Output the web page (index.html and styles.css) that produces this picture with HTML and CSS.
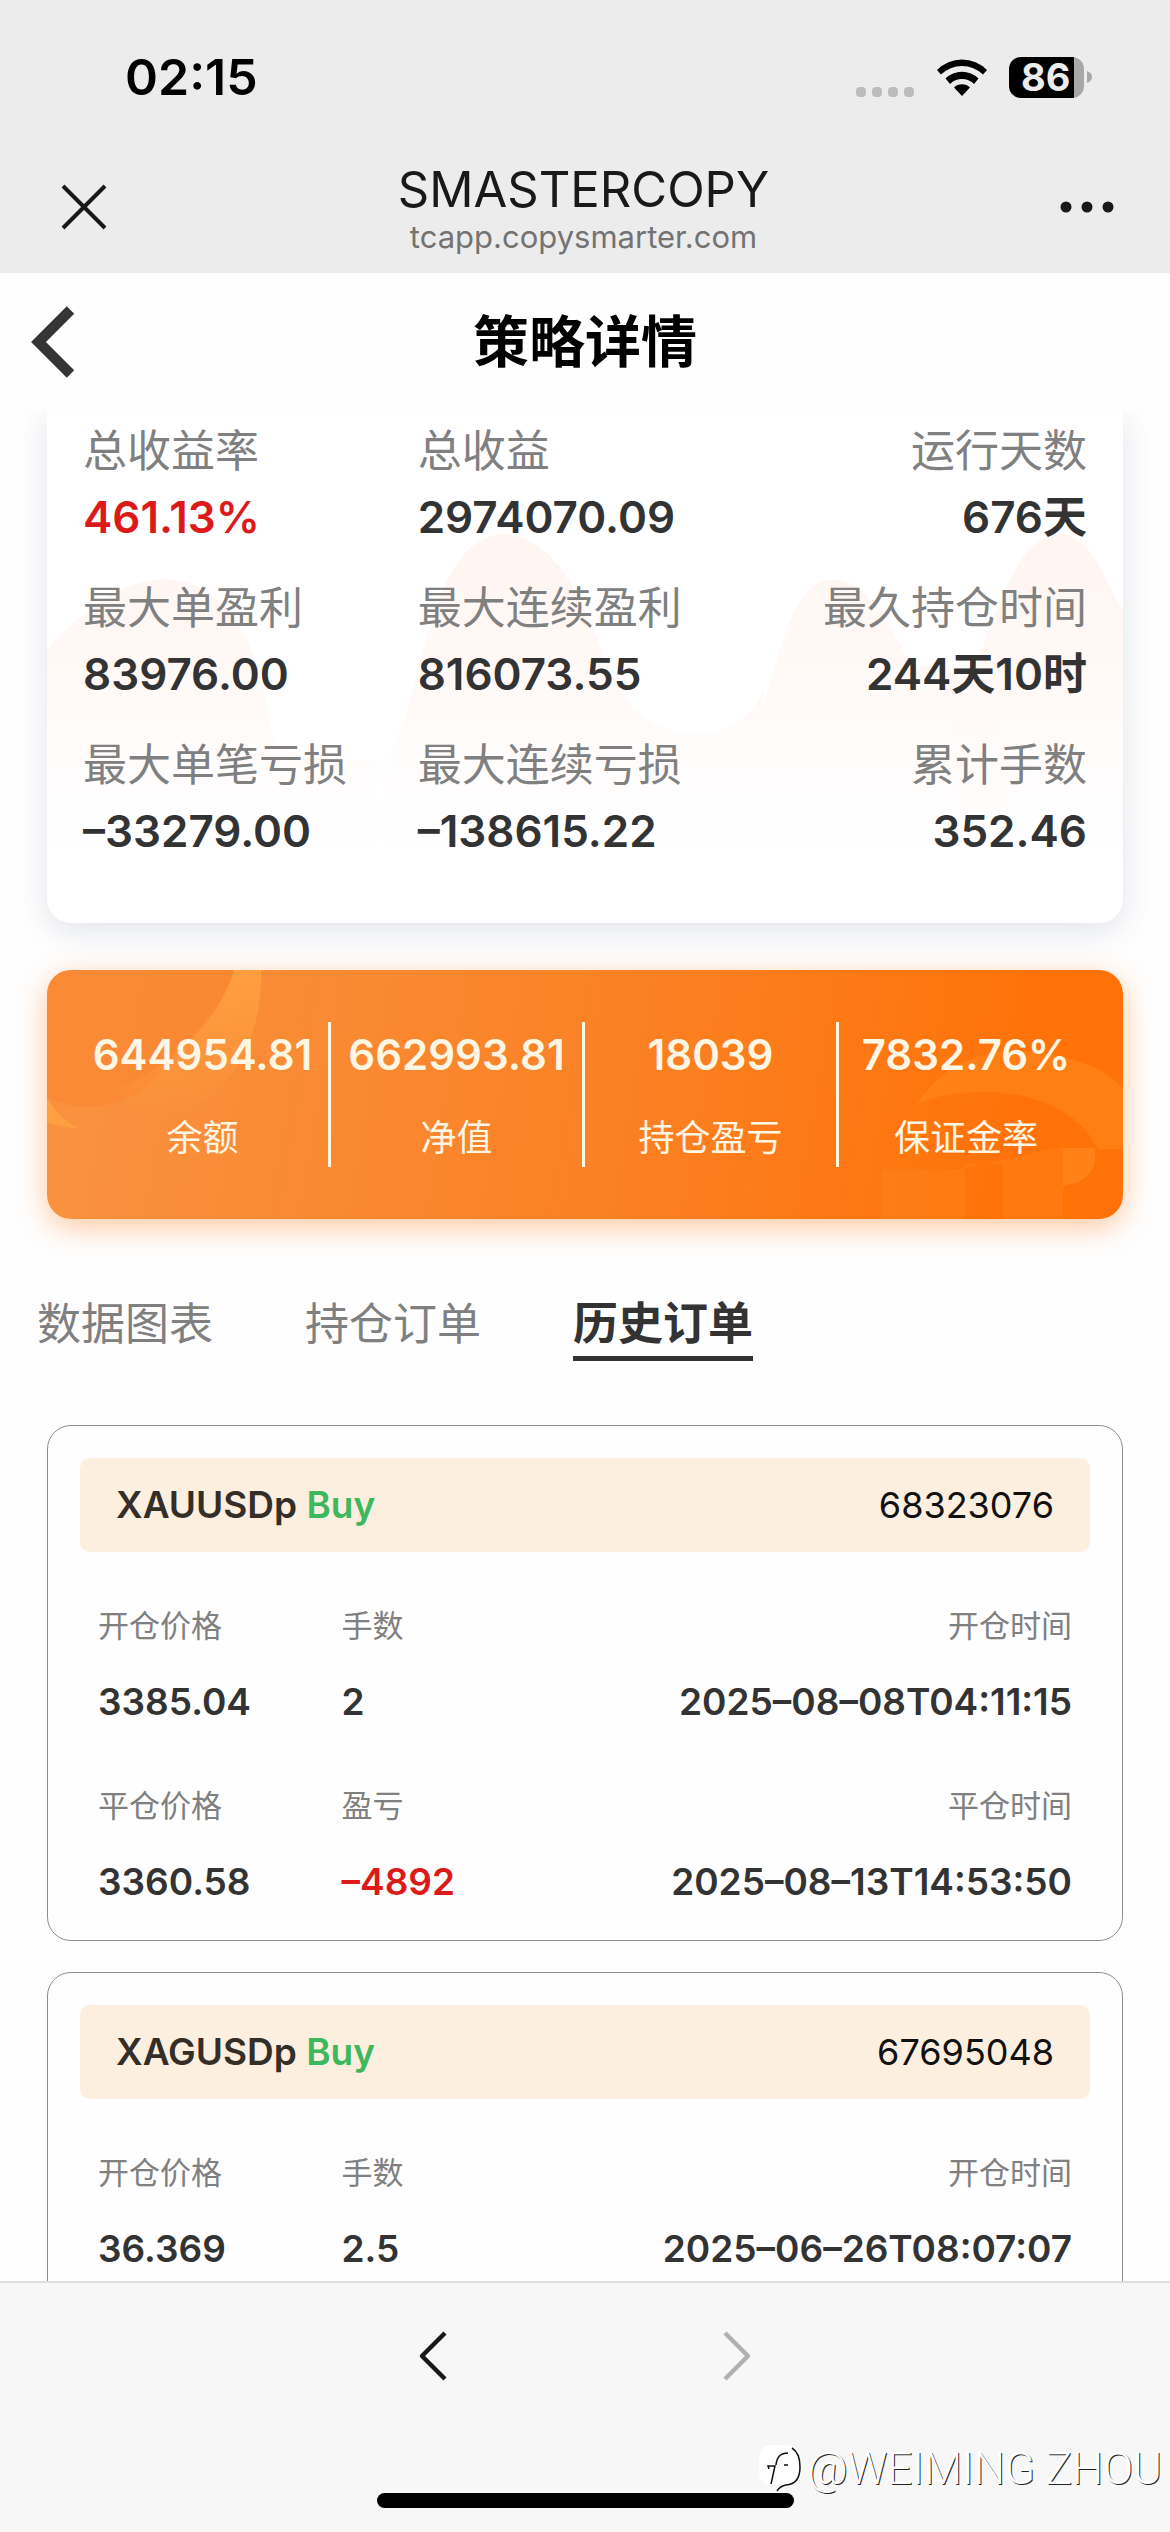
FILE: index.html
```html
<!DOCTYPE html>
<html lang="zh-CN">
<head>
<meta charset="utf-8">
<meta name="viewport" content="width=device-width, initial-scale=1">
<title>SMASTERCOPY</title>
<link rel="stylesheet" href="styles.css">
</head>
<body>
<header class="chrome">
  <div class="status">
    <time class="clock">02:15</time>
    <div class="indicators">
      <svg class="signal" width="60" height="12" viewBox="0 0 60 12" aria-hidden="true"><g fill="#bcbcbc"><rect x="1" y="1" width="10" height="10" rx="4"/><rect x="17" y="1" width="10" height="10" rx="4"/><rect x="33" y="1" width="10" height="10" rx="4"/><rect x="49" y="1" width="10" height="10" rx="4"/></g></svg>
      <svg width="50" height="38" viewBox="0 0 50 38" aria-label="Wi-Fi"><path d="M0 12A35 35 0 0 1 50 12L46 16.500A30 30 0 0 0 4 16.500Z"/><path d="M8.500 20.500A23.500 23.500 0 0 1 41.500 20.500L37 26A17 17 0 0 0 13 26Z"/><path d="M17 29.500A11.500 11.500 0 0 1 33 29.500L25 38Z"/></svg>
      <div class="battery"><span class="battery-level">86</span><svg class="battery-nub" width="5" height="12" viewBox="0 0 5 12" aria-hidden="true"><path d="M0 0Q5 2 5 6T0 12Z" fill="#a8a8a8"/></svg></div>
    </div>
  </div>
  <div class="titlebar">
    <button class="icon-button" type="button" aria-label="关闭"><svg width="46" height="46" viewBox="0 0 46 46"><path d="M2 2L44 44M44 2L2 44" stroke="#191919" stroke-width="4"/></svg></button>
    <div class="site">
      <div class="site-name">SMASTERCOPY</div>
      <div class="site-host">tcapp.copysmarter.com</div>
    </div>
    <button class="icon-button" type="button" aria-label="更多"><svg width="54" height="12" viewBox="0 0 54 12"><g fill="#191919"><circle cx="6" cy="6" r="5.500"/><circle cx="27" cy="6" r="5.500"/><circle cx="48" cy="6" r="5.500"/></g></svg></button>
  </div>
</header>

<div class="page-head">
  <button class="icon-button" type="button" aria-label="返回"><svg width="44" height="72" viewBox="0 0 44 72"><path d="M39.500 4L7.500 36L39.500 68" fill="none" stroke="#353535" stroke-width="10.500"/></svg></button>
  <h1>策略详情</h1>
</div>

<main class="content">
  <section class="stats">
    <svg class="stats-art" viewBox="0 0 1076 514" preserveAspectRatio="none" aria-hidden="true">
      <defs>
        <linearGradient id="hill" x1="0" y1="120" x2="0" y2="470" gradientUnits="userSpaceOnUse"><stop offset="0" stop-color="#fff5f1"/><stop offset=".5" stop-color="#fffaf8"/><stop offset="1" stop-color="#fff" stop-opacity="0"/></linearGradient>
      </defs>
      <g fill="url(#hill)">
        <path d="M0 240C30 205 80 165 125 170C190 178 215 250 224 320C232 352 290 352 330 350V470H0Z"/>
        <path d="M340 350C378 290 378 130 456 124C530 130 545 240 580 290C625 345 700 330 716 280V470H330Z"/>
        <path d="M716 300C735 230 750 170 786 170C825 170 850 230 866 260C905 240 945 300 966 330V470H716Z"/>
        <path d="M905 300C950 230 960 124 1015 124C1050 130 1060 180 1076 200V470H905Z"/>
      </g>
    </svg>
    <dl class="stats-grid">
      <div><dt>总收益率</dt><dd class="loss">461.13%</dd></div>
      <div><dt>总收益</dt><dd>2974070.09</dd></div>
      <div><dt>运行天数</dt><dd>676天</dd></div>
      <div><dt>最大单盈利</dt><dd>83976.00</dd></div>
      <div><dt>最大连续盈利</dt><dd>816073.55</dd></div>
      <div><dt>最久持仓时间</dt><dd>244天10时</dd></div>
      <div><dt>最大单笔亏损</dt><dd>–33279.00</dd></div>
      <div><dt>最大连续亏损</dt><dd>–138615.22</dd></div>
      <div><dt>累计手数</dt><dd>352.46</dd></div>
    </dl>
  </section>

  <section class="account">
    <svg class="account-art account-art-left" width="216" height="160" viewBox="0 0 216 160" aria-hidden="true">
      <defs><linearGradient id="swoosh" x1="0" y1="0" x2="0" y2="1"><stop offset="0" stop-color="#ff9f40"/><stop offset="1" stop-color="#ff9f40" stop-opacity="0"/></linearGradient></defs>
      <path d="M0 0H187C175 40 145 62 125 90C95 130 50 150 0 128Z" fill="#ff7a20" opacity=".28"/>
      <path d="M187 0H214C216 60 190 120 135 145C110 152 90 145 70 120C130 90 170 55 187 0Z" fill="url(#swoosh)"/>
      <path d="M0 128Q12 148 32 159Q10 156 0 152Z" fill="#ff9f40"/>
    </svg>
    <svg class="account-art account-art-right" width="250" height="170" viewBox="0 0 250 170" aria-hidden="true">
      <path d="M44 55C70 15 110 0 150 2C200 6 235 20 250 40V100H225C205 60 160 43 110 43Q70 43 44 55Z" fill="#ff8c20" opacity=".5"/>
      <path d="M182 99H222Q226 132 190 137V170H130V115H92V170H8V120H90Z" fill="#ff9128" opacity=".25"/>
      <path d="M182 99H222Q226 132 190 137V99Z" fill="#ff9128" opacity=".4"/>
    </svg>
    <dl class="account-grid">
      <div><dt>余额</dt><dd>644954.81</dd></div>
      <div><dt>净值</dt><dd>662993.81</dd></div>
      <div><dt>持仓盈亏</dt><dd>18039</dd></div>
      <div><dt>保证金率</dt><dd>7832.76%</dd></div>
    </dl>
  </section>

  <nav class="tabs">
    <button class="tab" type="button">数据图表</button>
    <button class="tab" type="button">持仓订单</button>
    <button class="tab tab-active" type="button" aria-current="true">历史订单</button>
  </nav>

  <section class="orders">
    <article class="order">
      <header class="order-head"><h2>XAUUSDp <span class="buy">Buy</span></h2><span>68323076</span></header>
      <dl class="order-grid">
        <div><dt>开仓价格</dt><dd>3385.04</dd></div>
        <div><dt>手数</dt><dd>2</dd></div>
        <div><dt>开仓时间</dt><dd>2025–08–08T04:11:15</dd></div>
        <div><dt>平仓价格</dt><dd>3360.58</dd></div>
        <div><dt>盈亏</dt><dd class="loss">–4892</dd></div>
        <div><dt>平仓时间</dt><dd>2025–08–13T14:53:50</dd></div>
      </dl>
    </article>
    <article class="order">
      <header class="order-head"><h2>XAGUSDp <span class="buy">Buy</span></h2><span>67695048</span></header>
      <dl class="order-grid">
        <div><dt>开仓价格</dt><dd>36.369</dd></div>
        <div><dt>手数</dt><dd>2.5</dd></div>
        <div><dt>开仓时间</dt><dd>2025–06–26T08:07:07</dd></div>
      </dl>
    </article>
  </section>
</main>

<footer class="toolbar">
  <nav class="history">
    <button class="icon-button" type="button" aria-label="后退"><svg width="30" height="54" viewBox="0 0 30 54"><path d="M27 4L4 27L27 50" fill="none" stroke="#191919" stroke-width="4.500" stroke-linejoin="round"/></svg></button>
    <button class="icon-button" type="button" aria-label="前进" disabled><svg width="30" height="54" viewBox="0 0 30 54"><path d="M3 4L26 27L3 50" fill="none" stroke="#b0b0b0" stroke-width="4.500" stroke-linejoin="round"/></svg></button>
  </nav>
  <div class="home-bar"></div>
  <div class="watermark">
    <svg width="44" height="48" viewBox="0 0 44 48" aria-hidden="true">
      <path d="M12 0H28Q40 0 40 14V26Q40 40 28 40L19 46L18 40H12Q0 40 0 26V14Q0 0 12 0Z" fill="#fff"/>
      <path d="M33 3Q41 8 41 22Q41 39 27 40Q21 41 18 46" fill="none" stroke="#111" stroke-width="1.500"/>
      <path d="M12 39L16 21H9L10 24M17 20Q18 8 29 8M25 20H29" fill="none" stroke="#111" stroke-width="1.500"/>
    </svg>
    <span>@WEIMING ZHOU</span>
  </div>
</footer>
</body>
</html>
```
FILE: styles.css
```css
* {
  box-sizing: border-box;
}

body {
  margin: 0;
  height: 100vh;
  display: flex;
  flex-direction: column;
  overflow: hidden;
  background: #fefefe;
  color: #333;
  font-family: Inter, "Noto Sans CJK SC", sans-serif;
}

h1, h2, dl, dd {
  margin: 0;
}

button {
  border: 0;
  padding: 0;
  background: none;
  font-family: inherit;
}

svg {
  display: block;
}

.icon-button {
  display: flex;
}

/* Status bar and browser title */

.chrome {
  flex: none;
  background: #ececec;
  color: #000;
}

.status {
  display: flex;
  justify-content: space-between;
  align-items: center;
  height: 154px;
  padding: 0 78px 0 125px;
}

.clock {
  font-size: 50px;
  font-weight: 600;
}

.indicators {
  display: flex;
  align-items: center;
  gap: 22px;
}

.signal {
  align-self: flex-end;
}

.battery {
  display: flex;
  align-items: center;
  gap: 3px;
}

.battery-level {
  width: 75px;
  height: 41px;
  padding-left: 12px;
  border-radius: 12px;
  background: linear-gradient(90deg, #000 65px, #a8a8a8 65px);
  color: #ececec;
  font-size: 38px;
  font-weight: 700;
  line-height: 41px;
}

.titlebar {
  display: flex;
  justify-content: space-between;
  align-items: center;
  height: 119px;
  padding: 0 56px 14px 61px;
}

.site {
  display: flex;
  flex-direction: column;
  align-items: center;
}

.site-name {
  color: #191919;
  font-size: 49px;
  line-height: 60px;
}

.site-host {
  color: #737373;
  font-size: 31px;
  line-height: 34px;
}

/* Page heading */

.page-head {
  flex: none;
  position: relative;
  display: flex;
  align-items: center;
  height: 137px;
  padding: 0 31px;
}

.page-head h1 {
  flex: 1;
  margin-right: 44px;
  color: #000;
  font-size: 56px;
  line-height: 72px;
  text-align: center;
}

.content {
  flex: 1;
  min-height: 0;
  overflow: hidden;
  padding: 0 47px;
}

/* Strategy figures */

.stats {
  position: relative;
  padding: 9px 36px 58px;
  border-radius: 0 0 24px 24px;
  background: #fff;
  box-shadow: 0 8px 30px rgba(60, 70, 110, 0.14);
}

.stats-art {
  position: absolute;
  inset: 0;
  width: 100%;
  height: 100%;
}

.stats-grid {
  position: relative;
  display: grid;
  grid-template-columns: repeat(3, 1fr);
  row-gap: 25px;
}

.stats-grid div:nth-child(3n) {
  text-align: right;
}

.stats-grid dt {
  color: #808080;
  font-size: 44px;
  line-height: 64px;
  white-space: nowrap;
}

.stats-grid dd {
  font-size: 44px;
  font-weight: 600;
  line-height: 68px;
}

.stats-grid .loss,
.order-grid .loss {
  color: #dd1a1a;
}

/* Account summary */

.account {
  position: relative;
  margin-top: 47px;
  padding: 52px 30px;
  border-radius: 24px;
  background: linear-gradient(100deg, #f9913f 5%, #fb8023 55%, #ff7208 90%);
  box-shadow: 0 8px 30px rgba(255, 120, 20, 0.4);
}

.account-art {
  position: absolute;
}

.account-art-left {
  top: 0;
  left: 0;
  border-top-left-radius: 24px;
}

.account-art-right {
  right: 0;
  bottom: 0;
  border-bottom-right-radius: 24px;
}

.account-grid {
  position: relative;
  display: grid;
  grid-template-columns: repeat(4, 1fr);
  color: #fff6e3;
  text-align: center;
}

.account-grid div {
  display: flex;
  flex-direction: column-reverse;
  gap: 21px;
}

.account-grid div:not(:last-child) {
  border-right: 3px solid #fff6e3;
}

.account-grid dt {
  font-size: 36px;
  line-height: 58px;
}

.account-grid dd {
  font-size: 42px;
  font-weight: 600;
  line-height: 66px;
}

/* Tabs */

.tabs {
  display: flex;
  gap: 92px;
  margin: 73px -10px 64px;
}

.tab {
  border-bottom: 5px solid transparent;
  color: #808080;
  font-size: 44px;
  line-height: 64px;
}

.tab-active {
  border-color: #333;
  color: #333;
  font-size: 45px;
  font-weight: 700;
}

/* Orders */

.orders {
  display: flex;
  flex-direction: column;
  gap: 31px;
}

.order {
  padding: 32px;
  border: 1px solid #8e8e8e;
  border-radius: 24px;
}

.order-head {
  display: flex;
  justify-content: space-between;
  align-items: center;
  padding: 20px 36px;
  border-radius: 10px;
  background: #fdefdf;
  color: #111;
  font-size: 36px;
  line-height: 54px;
}

.order-head h2 {
  color: #332e28;
  font-size: 37px;
  font-weight: 600;
}

.buy {
  color: #3db85c;
}

.order-grid {
  display: grid;
  grid-template-columns: 1fr 1fr 2fr;
  row-gap: 54px;
  margin-top: 50px;
  padding: 0 18px;
}

.order-grid div {
  display: flex;
  flex-direction: column;
  gap: 26px;
}

.order-grid div:nth-child(3n) {
  text-align: right;
}

.order-grid dt {
  color: #808080;
  font-size: 31px;
  line-height: 48px;
}

.order-grid dd {
  font-size: 37px;
  font-weight: 600;
  line-height: 52px;
}

/* Bottom toolbar */

.toolbar {
  flex: none;
  position: relative;
  display: flex;
  flex-direction: column;
  justify-content: space-between;
  align-items: center;
  height: 251px;
  padding: 46px 0 24px;
  border-top: 2px solid #dedede;
  background: #f7f7f7;
}

.history {
  display: flex;
  gap: 274px;
}

.home-bar {
  width: 417px;
  height: 15px;
  border-radius: 8px;
  background: #000;
}

.watermark {
  position: absolute;
  right: 8px;
  bottom: 36px;
  display: flex;
  align-items: center;
  gap: 4px;
  color: #fff;
  font-family: Roboto, "Noto Sans", sans-serif;
  font-size: 44px;
  font-weight: 300;
  line-height: 54px;
  text-shadow: 1px 1px 0 #222;
}
```
